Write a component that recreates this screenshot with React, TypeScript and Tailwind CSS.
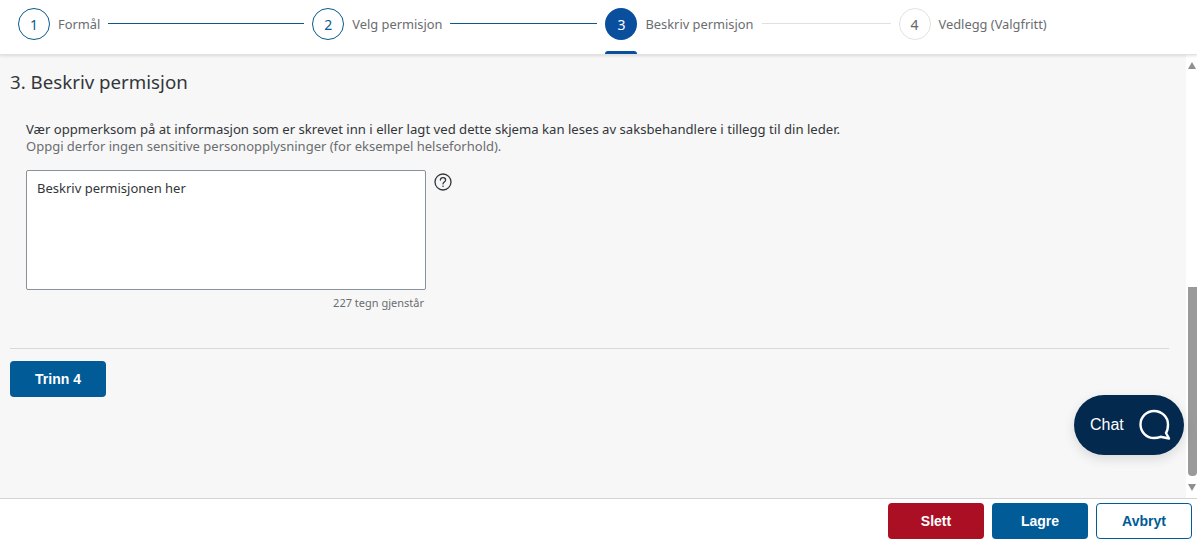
import React from "react";

const font = "font-['Noto_Sans',sans-serif]";

function Step({ n, label, state }: { n: number; label: string; state: "done" | "active" | "todo" }) {
  const circle =
    state === "done"
      ? "border border-[#0a5a8c] bg-white text-[#0a5a8c]"
      : state === "active"
        ? "bg-[#0a4f9e] text-white"
        : "border border-[#e2e2e2] bg-white text-[#666666]";
  return (
    <div className="relative flex h-[54px] shrink-0 items-start pt-2">
      <div className={`flex h-8 w-8 items-center justify-center rounded-full text-[14px] ${circle}`}>{n}</div>
      <span className="ml-2 text-[12.85px] leading-[32px] text-[#6a6d70]">{label}</span>
      {state === "active" && <div className="absolute bottom-0 left-0 h-[3px] w-8 rounded-t-sm bg-[#0a4f9e]" />}
    </div>
  );
}

function Line({ w, done }: { w: string; done: boolean }) {
  return <div className={`mx-2 mt-[-7px] h-px ${w} ${done ? "bg-[#0a5a8c]" : "bg-[#e0e0e0]"}`} />;
}

function Btn({ children, cls }: { children: React.ReactNode; cls: string }) {
  return (
    <button className={`flex h-9 w-24 items-center justify-center rounded-[4px] font-['Liberation_Sans',sans-serif] text-[14px] font-bold ${cls}`}>
      {children}
    </button>
  );
}

export default function App() {
  return (
    <div className={`relative flex h-[542px] w-[1197px] flex-col overflow-hidden bg-white ${font}`}>
      <header className="relative z-10 flex h-[55px] shrink-0 items-center border-b border-[#e2e2e2] bg-white pl-[18px] shadow-[0_1px_3px_rgba(0,0,0,0.12)]">
        <Step n={1} label="Formål" state="done" />
        <Line w="w-[196px]" done />
        <Step n={2} label="Velg permisjon" state="done" />
        <Line w="w-[147px]" done />
        <Step n={3} label="Beskriv permisjon" state="active" />
        <Line w="w-[129px]" done={false} />
        <Step n={4} label="Vedlegg (Valgfritt)" state="todo" />
      </header>

      <div className="flex min-h-0 flex-1">
        <main className="flex-1 bg-[#f7f7f7] pl-[10px] pr-[17px] pt-[14px]">
          <h1 className="text-[18.7px] leading-[26px] text-[#32363a]">3. Beskriv permisjon</h1>
          <div className="pl-4 pt-[26px]">
            <p className="text-[13.13px] leading-[17px] text-[#32363a]">
              Vær oppmerksom på at informasjon som er skrevet inn i eller lagt ved dette skjema kan leses av saksbehandlere i tillegg til din leder.
            </p>
            <p className="text-[13px] leading-[17px] text-[#6a6d70]">
              Oppgi derfor ingen sensitive personopplysninger (for eksempel helseforhold).
            </p>
            <div className="mt-[15px] flex items-start gap-2">
              <div className="h-[120px] w-[400px] rounded-[2px] border border-[#89919a] bg-white px-[10px] py-[9px] text-[13px] leading-[17px] text-[#32363a]">
                Beskriv permisjonen her
              </div>
              <svg className="mt-[3px]" width="18" height="18" viewBox="0 0 18 18" fill="none" stroke="#32363a" strokeWidth="1.3">
                <circle cx="9" cy="9" r="8" />
                <path d="M6.4 7C6.4 5.5 7.5 4.7 9 4.7c1.5 0 2.6.9 2.6 2.2 0 2-2.6 2-2.6 4" strokeLinecap="round" />
                <circle cx="9" cy="13.3" r=".8" fill="#32363a" stroke="none" />
              </svg>
            </div>
            <div className="mt-[5px] w-[398px] text-right text-[11px] leading-[16px] text-[#6a6d70]">227 tegn gjenstår</div>
          </div>
          <div className="mt-[37px] border-t border-[#d9d9d9] pt-3">
            <Btn cls="bg-[#005b96] text-white">Trinn 4</Btn>
          </div>
        </main>

        <aside className="relative w-[11px] shrink-0 bg-white">
          <div className="absolute left-[2px] top-[7px] h-0 w-0 border-x-[4.5px] border-b-[7px] border-x-transparent border-b-[#8f8f8f]" />
          <div className="absolute bottom-[22px] left-[2px] top-[232px] w-[9px] rounded-b-sm bg-[#9a9a9a]" />
          <div className="absolute bottom-[7px] left-[2px] h-0 w-0 border-x-[4.5px] border-t-[7px] border-x-transparent border-t-[#8f8f8f]" />
        </aside>
      </div>

      <footer className="flex h-[44px] shrink-0 items-start justify-end gap-2 border-t border-[#d4d4d4] bg-white pr-[5px] pt-1">
        <Btn cls="bg-[#ab0f24] text-white">Slett</Btn>
        <Btn cls="bg-[#005b96] text-white">Lagre</Btn>
        <Btn cls="border border-[#005b96] bg-white text-[#005b96]">Avbryt</Btn>
      </footer>

      <div className="absolute left-[1074px] top-[395px] flex h-[60px] w-[110px] items-center rounded-[30px] bg-[#04294f] pl-[16px] font-['Liberation_Sans',sans-serif] text-[16px] text-white shadow-[0_4px_12px_rgba(0,0,0,0.12)]">
        Chat
        <svg className="ml-[15px]" width="32" height="32" viewBox="0 0 32 32" fill="none" stroke="white" strokeWidth="2.4" strokeLinejoin="round">
          <path d="M15 2A13.5 13.5 0 1 0 15 29C17 29 19.5 28.6 21.5 27.8L30 29.5L27 24C28.5 21.8 29 18.5 29 15.5A14 13.5 0 0 0 15 2Z" />
        </svg>
      </div>
    </div>
  );
}
